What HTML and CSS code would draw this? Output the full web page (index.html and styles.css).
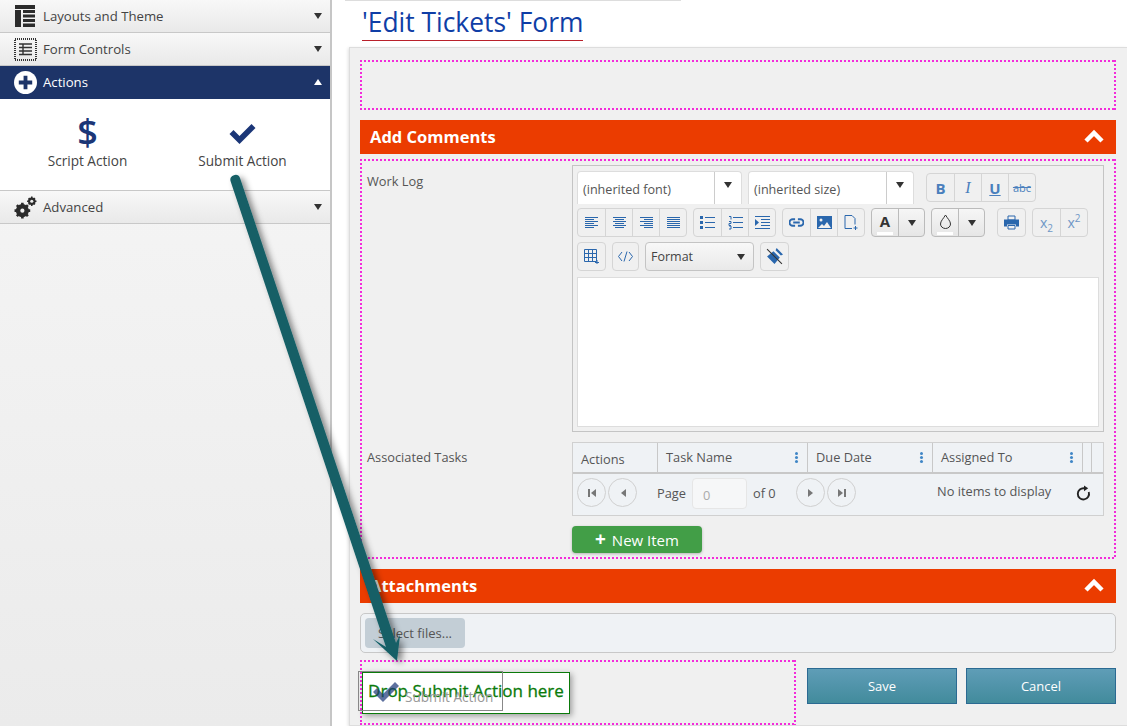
FILE: index.html
```html
<!DOCTYPE html>
<html lang="en">
<head>
  <meta charset="UTF-8" />
  <title>Edit Tickets Form</title>
  <link rel="stylesheet" href="styles.css">
</head>
<body>
  <!-- Left toolbox -->
  <aside class="toolbox">
    <div class="acc-head">
      <svg class="acc-icon" viewBox="0 0 23 23"><path fill="#2b2b2b" d="M1 0h20v4H1zM1 5h6v17H1zM9 5h12v3H9zM9 9.500h12v3H9zM9 14h12v3H9zM9 18.500h12V22H9z"/></svg>
      <span class="acc-title">Layouts and Theme</span><i class="caret"></i>
    </div>
    <div class="acc-head">
      <svg class="acc-icon" viewBox="0 0 23 23"><rect x="1" y="1" width="21" height="21" fill="none" stroke="#333" stroke-width="2" stroke-dasharray="1 1"/><path fill="none" stroke="#333" stroke-width="1.400" d="M5 6h13M5 9.500h13M5 13h13M5 16.500h13M9 6v11"/></svg>
      <span class="acc-title">Form Controls</span><i class="caret"></i>
    </div>
    <div class="acc-head active">
      <svg class="acc-icon" viewBox="0 0 24 24"><circle cx="12" cy="12" r="12" fill="#fff"/><path fill="#1d3468" d="M10 5h4v5h5v4h-5v5h-4v-5H5v-4h5z"/></svg>
      <span class="acc-title">Actions</span><i class="caret up"></i>
    </div>
    <div class="acc-body">
      <div class="tool">
        <span class="tool-dollar">$</span>
        <span>Script Action</span>
      </div>
      <div class="tool">
        <svg class="tool-check" viewBox="0 0 28 22"><path fill="#1b3677" d="M1 11l4-4 6 6L23 1l4 4-16 16z"/></svg>
        <span>Submit Action</span>
      </div>
    </div>
    <div class="acc-head">
      <svg class="acc-icon" viewBox="0 0 22 22"><circle cx="8" cy="14" r="4.500" fill="none" stroke="#2b2b2b" stroke-width="3.500"/><path stroke="#2b2b2b" stroke-width="2.500" d="M8 6.500v15M.5 14h15M2.700 8.700l10.600 10.600M13.300 8.700L2.700 19.300"/><circle cx="8" cy="14" r="2" fill="#eee"/><circle cx="17" cy="5" r="2.600" fill="none" stroke="#2b2b2b" stroke-width="2"/><path stroke="#2b2b2b" stroke-width="1.500" d="M17 .5v9M12.500 5h9M14 2l6 6M20 2l-6 6"/><circle cx="17" cy="5" r="1.500" fill="#eee"/></svg>
      <span class="acc-title">Advanced</span><i class="caret"></i>
    </div>
  </aside>

  <!-- Form designer -->
  <main class="designer">
    <div class="title-rule"></div>
    <h1 class="form-title">'Edit Tickets' Form</h1>

    <div class="form-panel">
      <div class="drop-zone empty-zone"></div>

      <div class="section-bar">
        <span>Add Comments</span>
        <svg class="chev" viewBox="0 0 20 14"><path fill="none" stroke="#fff" stroke-width="4.500" d="M2 12l8-8 8 8"/></svg>
      </div>

      <div class="drop-zone fields-zone">
        <div class="field-row">
          <label class="field-label">Work Log</label>
          <div class="editor">
            <div class="tb-row row-one">
              <div class="combo"><span>(inherited font)</span><b class="combo-arrow"><i class="caret"></i></b></div>
              <div class="combo combo-size"><span>(inherited size)</span><b class="combo-arrow"><i class="caret"></i></b></div>
              <div class="btn-group">
                <a class="tb-btn bold">B</a><a class="tb-btn ital">I</a><a class="tb-btn under">U</a><a class="tb-btn strike">abc</a>
              </div>
            </div>
            <div class="tb-row row-two">
              <div class="btn-group">
                <a class="tb-btn"><svg class="align" viewBox="0 0 13 11"><path d="M0 .5h13M0 2.500h9M0 4.500h13M0 6.500h9M0 8.500h13M0 10.500h9"/></svg></a>
                <a class="tb-btn"><svg class="align" viewBox="0 0 13 11"><path d="M0 .5h13M2 2.500h9M0 4.500h13M2 6.500h9M0 8.500h13M2 10.500h9"/></svg></a>
                <a class="tb-btn"><svg class="align" viewBox="0 0 13 11"><path d="M0 .5h13M4 2.500h9M0 4.500h13M4 6.500h9M0 8.500h13M4 10.500h9"/></svg></a>
                <a class="tb-btn"><svg class="align" viewBox="0 0 13 11"><path d="M0 .5h13M0 2.500h13M0 4.500h13M0 6.500h13M0 8.500h13M0 10.500h13"/></svg></a>
              </div>
              <div class="btn-group">
                <a class="tb-btn"><svg viewBox="0 0 15 13"><path d="M5 1.500h10M5 6.500h10M5 11.500h10"/><path class="solid" d="M0 0h3v3H0zM0 5h3v3H0zM0 10h3v3H0z"/></svg></a>
                <a class="tb-btn"><svg viewBox="0 0 15 13"><path d="M5 1.500h10M5 6.500h10M5 11.500h10M1 .5h2v3M1 5.500h2v2H1v2h2M1 10h2v3H1"/></svg></a>
                <a class="tb-btn"><svg viewBox="0 0 15 13"><path d="M0 .5h15M6 3.500h9M6 6.500h9M6 9.500h9M0 12.500h15"/><path class="solid" d="M0 3l4 3.500L0 10z"/></svg></a>
              </div>
              <div class="btn-group">
                <a class="tb-btn"><svg viewBox="0 0 16 10"><path stroke-width="2" d="M6.500 1.500H4a3.500 3.500 0 0 0 0 7h2.500M9.500 1.500H12a3.500 3.500 0 0 1 0 7H9.500M4.500 5h7"/></svg></a>
                <a class="tb-btn"><svg viewBox="0 0 15 13"><path class="solid" d="M0 0h15v13H0z"/><circle cx="4" cy="4" r="1.500" fill="#f0f0f0" stroke="none"/><path fill="#f0f0f0" stroke="none" d="M1 12l4-4 2 2 3-4 4 6z"/></svg></a>
                <a class="tb-btn"><svg viewBox="0 0 15 15"><path d="M1 .5h7l3 3v6M1 .5v13h7M11.500 11v4M9.500 13h4"/></svg></a>
              </div>
              <div class="btn-group gray-group">
                <a class="tb-btn"><span class="color-a">A</span><u class="swatch"></u></a>
                <a class="tb-btn split"><i class="caret"></i></a>
              </div>
              <div class="btn-group gray-group">
                <a class="tb-btn"><svg class="drop-icon" viewBox="0 0 12 15"><path d="M6 1C4 4.500 1 7 1 10a5 4.500 0 0 0 10 0C11 7 8 4.500 6 1z"/></svg><u class="swatch"></u></a>
                <a class="tb-btn split"><i class="caret"></i></a>
              </div>
              <div class="btn-group print-group">
                <a class="tb-btn"><svg viewBox="0 0 15 14"><path d="M4 .5h7v4H4zM4 10h7v3.500H4z"/><path class="solid" d="M0 4h15v7h-3V9H3v2H0z"/></svg></a>
              </div>
              <div class="btn-group">
                <a class="tb-btn script"><span>x<sub>2</sub></span></a><a class="tb-btn script"><span>x<sup>2</sup></span></a>
              </div>
            </div>
            <div class="tb-row row-three">
              <div class="btn-group"><a class="tb-btn"><svg viewBox="0 0 15 15"><path d="M.5.500h12v12H.5zM4.500.500v12M8.500.500v12M.5 4.500h12M.5 8.500h12M13 11v4M11 13.500h4"/></svg></a></div>
              <div class="btn-group code-group"><a class="tb-btn"><svg viewBox="0 0 15 11"><path d="M4 1L.5 5.500 4 10M11 1l3.500 4.500L11 10M9 .5L6 10.500"/></svg></a></div>
              <div class="format-box"><span>Format</span><i class="caret"></i></div>
              <div class="btn-group"><a class="tb-btn"><svg class="eraser" viewBox="0 0 16 16"><path class="solid" d="M10 0l6 6-2 1-5-5zM7 3l6 6-5 6-7-7z"/><path stroke="#333" d="M1 1l14 14"/></svg></a></div>
            </div>
            <div class="editor-area"></div>
          </div>
        </div>

        <div class="field-row tasks-row">
          <label class="field-label">Associated Tasks</label>
          <div class="tasks-col">
            <div class="grid">
              <div class="grid-head">
                <div class="gh gh-actions">Actions</div>
                <div class="gh gh-name">Task Name<em class="dots"></em></div>
                <div class="gh gh-date">Due Date<em class="dots"></em></div>
                <div class="gh gh-assign">Assigned To<em class="dots"></em></div>
                <div class="gh gh-end"></div>
              </div>
              <div class="grid-pager">
                <a class="page-btn"><svg viewBox="0 0 8 8"><path d="M0 0h2v8H0zM8 0v8L3 4z"/></svg></a>
                <a class="page-btn"><svg viewBox="0 0 8 8"><path d="M7 0v8L2 4z"/></svg></a>
                <span class="page-label">Page</span>
                <span class="page-input">0</span>
                <span class="page-of">of 0</span>
                <a class="page-btn"><svg viewBox="0 0 8 8"><path d="M1 0v8l5-4z"/></svg></a>
                <a class="page-btn"><svg viewBox="0 0 8 8"><path d="M0 0v8l5-4zM6 0h2v8H6z"/></svg></a>
                <span class="no-items">No items to display</span>
                <svg class="refresh" viewBox="0 0 16 16"><path fill="none" stroke="#222" stroke-width="2" d="M9 3A6 6 0 1 0 13.600 7"/><path fill="#222" d="M8.500 0v6L13 3z"/></svg>
              </div>
            </div>
            <a class="new-item"><b>+</b> New Item</a>
          </div>
        </div>
      </div>

      <div class="section-bar attach-bar">
        <span>Attachments</span>
        <svg class="chev" viewBox="0 0 20 14"><path fill="none" stroke="#fff" stroke-width="4.500" d="M2 12l8-8 8 8"/></svg>
      </div>

      <div class="upload-box"><a class="select-files">Select files...</a></div>

      <div class="form-foot">
        <div class="drop-zone foot-zone"></div>
        <a class="foot-btn">Save</a>
        <a class="foot-btn">Cancel</a>
      </div>
    </div>
  </main>

  <!-- Drag overlay -->
  <div class="drop-tip">Drop Submit Action here</div>
  <div class="drag-ghost">
    <svg viewBox="0 0 28 22"><path fill="#1b3677" d="M1 11l4-4 6 6L23 1l4 4-16 16z"/></svg>
    <span>Submit Action</span>
  </div>
  <svg class="drag-arrow" width="1127" height="726" viewBox="0 0 1127 726">
    <defs>
      <filter id="arrowShadow" x="-20%" y="-5%" width="140%" height="110%">
        <feDropShadow dx="4" dy="3" stdDeviation="3" flood-color="#000" flood-opacity="0.45"/>
      </filter>
    </defs>
    <path filter="url(#arrowShadow)" fill="#135f66" d="M230.500 181a5 5 0 0 1 9.500-3L396 643l4-8-3 26-24-22 13 8z"/>
  </svg>
</body>
</html>
```
FILE: styles.css
```css
html, body {
  margin: 0;
  height: 726px;
  overflow: hidden;
}

body {
  display: flex;
  position: relative;
  font-family: "Open Sans", "Noto Sans", sans-serif;
  font-size: 13px;
  color: #444;
  background: #fff;
}

/* Toolbox */
.toolbox {
  width: 332px;
  flex: none;
  box-sizing: border-box;
  border-right: 2px solid #c6c6c6;
  background: linear-gradient(#f7f7f7, #ebebeb);
}

.acc-head {
  height: 33px;
  box-sizing: border-box;
  display: flex;
  align-items: center;
  padding: 0 8px 0 14px;
  border-bottom: 1px solid #c8c8c8;
  background: linear-gradient(#f8f8f8, #e9e9e9);
  color: #444;
}

.acc-head.active {
  background: #1d3468;
  border-bottom-color: #1d3468;
  color: #fff;
}

.acc-icon {
  width: 23px;
  height: 23px;
  flex: none;
}

.acc-title {
  margin-left: 6px;
  flex: 1;
  font-size: 13.200px;
}

.caret {
  display: inline-block;
  width: 0;
  height: 0;
  border-left: 4px solid transparent;
  border-right: 4px solid transparent;
  border-top: 6px solid #333;
}

.caret.up {
  border-top: 0;
  border-bottom: 6px solid #fff;
}

.acc-body {
  height: 92px;
  box-sizing: border-box;
  background: #fff;
  border-bottom: 1px solid #c8c8c8;
  display: flex;
  padding-left: 10px;
}

.tool {
  width: 155px;
  height: 71px;
  display: flex;
  flex-direction: column;
  align-items: center;
  justify-content: flex-end;
  font-size: 13.600px;
  color: #444;
}

.tool-dollar {
  display: block;
  height: 32px;
  margin-bottom: 3px;
  font-size: 36px;
  line-height: 32px;
  font-weight: 600;
  color: #1b3677;
}

.tool-check {
  width: 29px;
  height: 22px;
  margin-bottom: 6px;
}

/* Designer area */
.designer {
  flex: 1;
  min-width: 0;
  padding-left: 17px;
}

.title-rule {
  width: 336px;
  height: 1px;
  margin-left: -4px;
  background: #ddd;
}

.form-title {
  display: block;
  width: fit-content;
  margin: 0 0 6px 13px;
  height: 40px;
  box-sizing: border-box;
  border-bottom: 1px solid #b9202a;
  font-size: 26.400px;
  line-height: 43px;
  font-weight: 400;
  color: #0f3ea6;
}

.form-panel {
  box-sizing: border-box;
  height: 679px;
  padding: 12px 11px 0 10px;
  background: #f0f0f0;
  border: 1px solid #ddd;
  border-right: 0;
  box-shadow: -1px 1px 3px rgba(0, 0, 0, 0.12);
}

/* Square dots, the round ones of border: dotted look too pale */
.drop-zone {
  box-sizing: border-box;
  border: 2px solid transparent;
  background-origin: border-box;
  background-repeat: no-repeat;
  background-image:
    repeating-linear-gradient(90deg, #f32bdb 0 2px, transparent 2px 4px),
    repeating-linear-gradient(90deg, #f32bdb 0 2px, transparent 2px 4px),
    repeating-linear-gradient(#f32bdb 0 2px, transparent 2px 4px),
    repeating-linear-gradient(#f32bdb 0 2px, transparent 2px 4px);
  background-size: 100% 2px, 100% 2px, 2px 100%, 2px 100%;
  background-position: top left, bottom left, top left, top right;
}

.empty-zone {
  height: 50px;
  margin-bottom: 10px;
}

.section-bar {
  height: 34px;
  box-sizing: border-box;
  display: flex;
  align-items: center;
  justify-content: space-between;
  padding: 0 12px 2px 10px;
  background: #eb3c00;
  color: #fff;
  font-size: 16.500px;
  font-weight: 700;
}

.chev {
  width: 20px;
  height: 14px;
}

.fields-zone {
  height: 400px;
  margin: 5px 0 10px;
  padding: 4px 10px 0 5px;
}

.field-row {
  display: flex;
}

.field-label {
  width: 205px;
  flex: none;
  padding-top: 7px;
  font-size: 12.800px;
  color: #555;
}

/* Rich text editor */
.editor {
  width: 532px;
  height: 267px;
  box-sizing: border-box;
  border: 1px solid #c4c4c4;
  padding: 7px 4px 0;
}

.tb-row {
  display: flex;
  height: 29px;
  gap: 6px;
}

.row-one {
  margin-bottom: 6px;
}

.row-two {
  margin-bottom: 5px;
}

.row-three {
  margin-bottom: 6px;
}

.combo {
  width: 165px;
  height: 33px;
  margin-top: -2px;
  box-sizing: border-box;
  display: flex;
  align-items: center;
  background: #fff;
  border: 1px solid #ddd;
  border-bottom: 0;
  border-radius: 4px 4px 0 0;
  padding-left: 5px;
  font-size: 12.600px;
  color: #555;
}

.combo span {
  flex: 1;
  padding-top: 2px;
}

.combo-arrow {
  width: 26px;
  align-self: stretch;
  display: flex;
  align-items: center;
  justify-content: center;
  border-left: 1px solid #ccc;
}

.combo-arrow .caret {
  margin-top: -6px;
}

.combo-size {
  width: 166px;
  margin-right: 6px;
}

.btn-group {
  display: flex;
  height: 29px;
  box-sizing: border-box;
  border: 1px solid #d5d5d5;
  border-radius: 4px;
}

.tb-btn {
  width: 27px;
  box-sizing: border-box;
  display: flex;
  align-items: center;
  justify-content: center;
  position: relative;
  color: #4a7fbd;
  border-left: 1px solid #d5d5d5;
}

.tb-btn:first-child {
  border-left: 0;
}

.tb-btn svg {
  width: 15px;
  height: 15px;
  fill: none;
  stroke: #2a67ad;
  stroke-width: 1;
}

.tb-btn svg.align {
  width: 13px;
  height: 11px;
}

.tb-btn svg.eraser {
  width: 17px;
  height: 17px;
}

.tb-btn svg .solid {
  fill: #2a67ad;
  stroke: none;
}

.bold {
  font-weight: 700;
  font-size: 15px;
}

.ital {
  font-style: italic;
  font-family: "Liberation Serif", serif;
  font-size: 16px;
}

.under {
  text-decoration: underline;
  font-weight: 700;
  font-size: 15px;
}

.strike {
  text-decoration: line-through;
  font-size: 11px;
}

.gray-group {
  background: linear-gradient(#f6f6f6, #e6e6e6);
  border-color: #bbb;
}

.gray-group .tb-btn {
  width: 26px;
}

.color-a {
  font-weight: 700;
  font-size: 15px;
  color: #333;
  margin-top: -3px;
}

.swatch {
  position: absolute;
  left: 5px;
  right: 5px;
  bottom: 1px;
  height: 3px;
  background: #fff;
}

.split {
  border-left-color: #bbb;
}

.tb-btn svg.drop-icon {
  stroke: #333;
  margin-top: -3px;
}

.print-group {
  margin-left: 6px;
}

.script {
  font-size: 14px;
  color: #6f97c6;
}

.script sub,
.script sup {
  font-size: 10px;
  line-height: 0;
}

.code-group {
  width: 27px;
}

.code-group .tb-btn {
  width: 25px;
}

.format-box {
  width: 109px;
  height: 29px;
  box-sizing: border-box;
  display: flex;
  align-items: center;
  justify-content: space-between;
  padding: 0 8px 0 5px;
  background: linear-gradient(#f8f8f8, #e9e9e9);
  border: 1px solid #c4c4c4;
  border-radius: 4px;
  font-size: 12.500px;
  color: #444;
}

.editor-area {
  height: 150px;
  background: #fff;
  border: 1px solid #ddd;
  box-sizing: border-box;
}

/* Tasks grid */
.tasks-row {
  margin-top: 10px;
}

.tasks-row .field-label {
  padding-top: 6px;
}

.tasks-col {
  width: 532px;
}

.grid {
  height: 74px;
  box-sizing: border-box;
  border: 1px solid #d0d0d0;
  background: #eff2f5;
}

.grid-head {
  display: flex;
  height: 29px;
  border-bottom: 2px solid #c8c8c8;
}

.gh {
  box-sizing: border-box;
  padding: 5px 0 0 8px;
  position: relative;
  border-right: 1px solid #c8c8c8;
  font-size: 12.800px;
  color: #555;
}

.gh-actions {
  width: 85px;
  padding-top: 7px;
}

.gh-name {
  width: 150px;
}

.gh-date {
  width: 125px;
}

.gh-assign {
  width: 150px;
}

.gh-end {
  width: 4px;
}

.dots {
  position: absolute;
  right: 9px;
  top: 9px;
  width: 3px;
  height: 3px;
  border-radius: 50%;
  background: #3f86c6;
  box-shadow: 0 4px 0 #3f86c6, 0 8px 0 #3f86c6;
}

.grid-pager {
  display: flex;
  align-items: center;
  height: 37px;
  padding-left: 4px;
  font-size: 12.800px;
  color: #555;
}

.page-btn {
  width: 29px;
  height: 29px;
  flex: none;
  box-sizing: border-box;
  margin-right: 2px;
  border: 1px solid #d0d0d0;
  border-radius: 50%;
  display: flex;
  align-items: center;
  justify-content: center;
}

.page-btn svg {
  width: 8px;
  height: 8px;
  fill: #777;
}

.page-label {
  width: 30px;
  margin-left: 18px;
}

.page-input {
  width: 55px;
  height: 31px;
  margin: 2px 6px 0 5px;
  box-sizing: border-box;
  padding: 7px 0 0 10px;
  background: #f6f7f8;
  border: 1px solid #e6e6e6;
  border-radius: 4px;
  color: #aaa;
}

.page-of {
  width: 37px;
  margin-right: 6px;
}

.no-items {
  width: 116px;
  flex: none;
  margin-left: 79px;
  margin-top: -3px;
  white-space: nowrap;
}

.refresh {
  width: 15px;
  height: 16px;
  margin-left: 23px;
}

.new-item {
  display: block;
  width: 130px;
  height: 27px;
  margin-top: 10px;
  background: #429e47;
  border-radius: 4px;
  box-shadow: 0 1px 3px rgba(0, 0, 0, 0.25);
  color: #fff;
  font-size: 15px;
  line-height: 28px;
  text-align: center;
}

.new-item b {
  font-size: 19px;
  line-height: 20px;
  margin-right: 2px;
}

/* Attachments */
.upload-box {
  box-sizing: border-box;
  height: 40px;
  margin-top: 10px;
  padding: 4px;
  background: #eff2f5;
  border: 1px solid #c8c8c8;
  border-radius: 5px;
}

.select-files {
  display: block;
  width: 100px;
  height: 30px;
  line-height: 30px;
  text-align: center;
  background: #c3ced6;
  border-radius: 4px;
  color: #555;
}

.form-foot {
  display: flex;
  margin-top: 7px;
}

.foot-zone {
  width: 436px;
  height: 65px;
  margin-right: 11px;
}

.foot-btn {
  width: 150px;
  height: 36px;
  box-sizing: border-box;
  margin-top: 8px;
  margin-right: 9px;
  background: linear-gradient(#5f9db7, #428b9c);
  border: 1px solid #2b6a92;
  color: #fff;
  line-height: 34px;
  text-align: center;
}

.foot-btn:last-child {
  margin-right: 0;
}

/* Drag overlay */
.drop-tip {
  position: absolute;
  left: 362px;
  top: 672px;
  width: 208px;
  height: 42px;
  box-sizing: border-box;
  border: 1px solid #0a7a0a;
  background: #fff;
  box-shadow: 2px 2px 6px rgba(0, 0, 0, 0.35);
  color: #0a7a0a;
  font-size: 17px;
  line-height: 36px;
  text-align: center;
  white-space: nowrap;
  -webkit-text-stroke: 0.3px #0a7a0a;
}

.drag-ghost {
  position: absolute;
  left: 358px;
  top: 671px;
  width: 145px;
  height: 40px;
  box-sizing: border-box;
  border: 1px solid #888;
  color: #999;
}

.drag-ghost svg {
  position: absolute;
  left: 13px;
  top: 9px;
  width: 28px;
  height: 22px;
  opacity: 0.7;
}

.drag-ghost span {
  position: absolute;
  left: 46px;
  top: 15px;
  font-size: 13.600px;
  white-space: nowrap;
}

.drag-arrow {
  position: absolute;
  left: 0;
  top: 0;
  pointer-events: none;
}
```
